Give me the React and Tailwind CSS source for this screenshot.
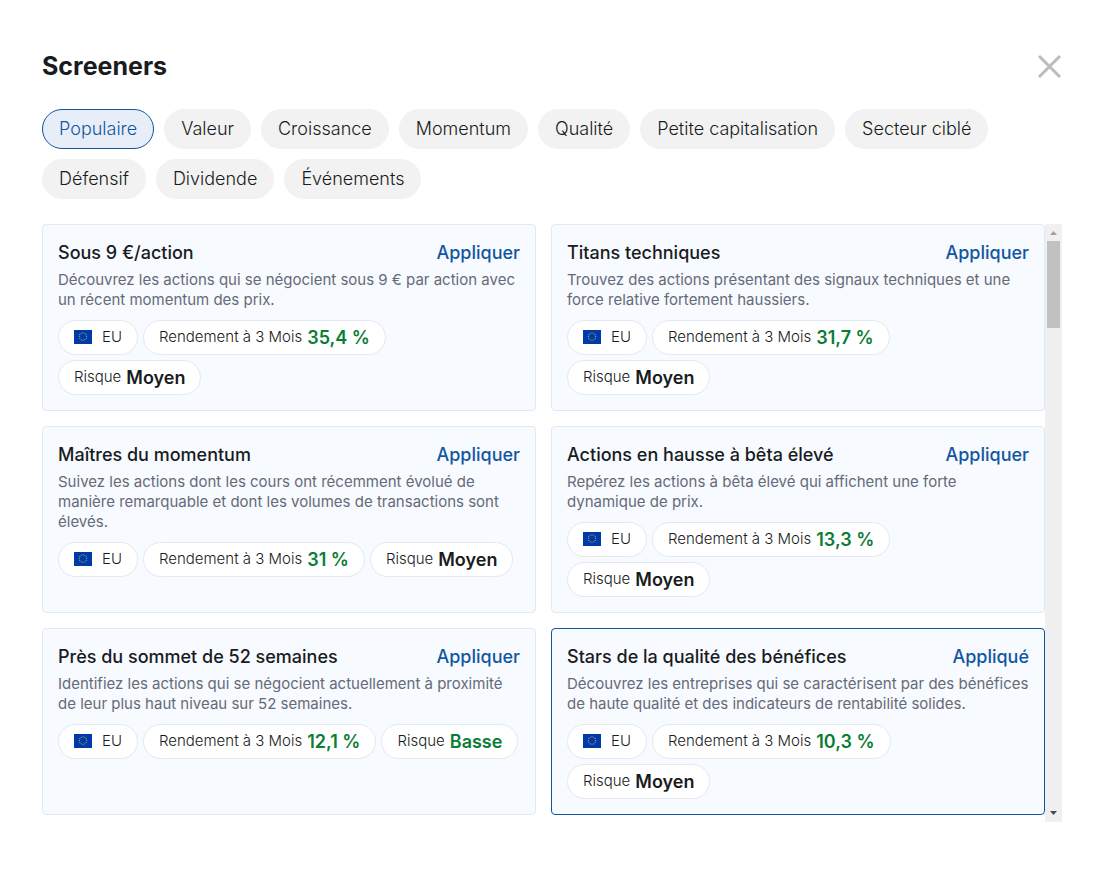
import React, { useState } from 'react';
import clsx from 'clsx';

const categories = [
    'Populaire',
    'Valeur',
    'Croissance',
    'Momentum',
    'Qualité',
    'Petite capitalisation',
    'Secteur ciblé',
    'Défensif',
    'Dividende',
    'Événements',
];

const screeners = [
    {
        id: 1,
        title: 'Sous 9 €/action',
        description: 'Découvrez les actions qui se négocient sous 9 € par action avec un récent momentum des prix.',
        performance: '35,4 %',
        risk: 'Moyen',
    },
    {
        id: 2,
        title: 'Titans techniques',
        description: 'Trouvez des actions présentant des signaux techniques et une force relative fortement haussiers.',
        performance: '31,7 %',
        risk: 'Moyen',
    },
    {
        id: 3,
        title: 'Maîtres du momentum',
        description:
            'Suivez les actions dont les cours ont récemment évolué de manière remarquable et dont les volumes de transactions sont élevés.',
        performance: '31 %',
        risk: 'Moyen',
    },
    {
        id: 4,
        title: 'Actions en hausse à bêta élevé',
        description: 'Repérez les actions à bêta élevé qui affichent une forte dynamique de prix.',
        performance: '13,3 %',
        risk: 'Moyen',
    },
    {
        id: 5,
        title: 'Près du sommet de 52 semaines',
        description:
            'Identifiez les actions qui se négocient actuellement à proximité de leur plus haut niveau sur 52 semaines.',
        performance: '12,1 %',
        risk: 'Basse',
    },
    {
        id: 6,
        title: 'Stars de la qualité des bénéfices',
        description:
            'Découvrez les entreprises qui se caractérisent par des bénéfices de haute qualité et des indicateurs de rentabilité solides.',
        performance: '10,3 %',
        risk: 'Moyen',
    },
];

const stars = Array.from({ length: 12 }, (_, i) => {
    const angle = (i * Math.PI) / 6;
    return { x: 9 + 3.7 * Math.sin(angle), y: 6.5 - 3.7 * Math.cos(angle) };
});

function EuFlag() {
    return (
        <svg viewBox="0 0 18 14" className="mb-px h-3.5 w-[18px] shrink-0" aria-hidden="true">
            <rect width="18" height="14" fill="#0039aa" />
            {stars.map((star, i) => (
                <circle key={i} cx={star.x} cy={star.y} r="0.55" fill="#c5b445" />
            ))}
        </svg>
    );
}

function Pill({ children, className }) {
    return (
        <li
            className={clsx(
                'flex h-[35px] items-center rounded-full border border-[#e3e9f2] bg-white px-[15px] text-[15px] font-light text-[#181c21]',
                className
            )}
        >
            {children}
        </li>
    );
}

function ScreenerCard({ screener, applied, onApply }) {
    return (
        <article
            className={clsx(
                'rounded border bg-[#f7faff] p-[15px]',
                applied ? 'border-[#1256a0]' : 'border-[#e3e9f2]'
            )}
        >
            <div className="mb-1 flex items-center justify-between text-lg leading-[26px]">
                <h2 className="font-medium text-[#181c21]">{screener.title}</h2>
                <button type="button" onClick={onApply} className="cursor-pointer font-medium text-[#1256a0]">
                    {applied ? 'Appliqué' : 'Appliquer'}
                </button>
            </div>
            <p className="text-[15px] leading-5 text-[#656a78]">{screener.description}</p>

            <ul className="mt-2.5 flex flex-wrap gap-[5px]">
                <Pill className="gap-2.5">
                    <EuFlag />
                    EU
                </Pill>
                <Pill className="gap-[5px]">
                    Rendement à 3 Mois
                    <span className="text-lg font-semibold text-[#0a7d35]">{screener.performance}</span>
                </Pill>
                <Pill className="gap-[5px]">
                    Risque
                    <span
                        className={clsx(
                            'text-lg font-semibold',
                            screener.risk === 'Basse' ? 'text-[#0a7d35]' : 'text-[#181c21]'
                        )}
                    >
                        {screener.risk}
                    </span>
                </Pill>
            </ul>
        </article>
    );
}

function ScrollTrack() {
    return (
        <div className="flex w-[17px] shrink-0 flex-col items-center bg-[#f0f0f0]" aria-hidden="true">
            <svg viewBox="0 0 17 17" className="size-[17px]">
                <path d="M5 11h7L8.500 7z" fill="#a0a0a0" />
            </svg>
            <div className="h-[87px] w-[13px] bg-[#c1c1c1]" />
            <svg viewBox="0 0 17 17" className="mt-auto size-[17px]">
                <path d="M5 6h7L8.500 10z" fill="#4a4a4a" />
            </svg>
        </div>
    );
}

export default function App() {
    const [category, setCategory] = useState('Populaire');
    const [appliedId, setAppliedId] = useState(6);

    return (
        <main className="bg-white px-[42px] py-12 font-['Inter',sans-serif] text-[#181c21]">
            <header className="flex items-center justify-between">
                <h1 className="text-[25px] leading-9 font-bold">Screeners</h1>
                <button type="button" aria-label="Fermer" className="cursor-pointer">
                    <svg viewBox="0 0 24 24" className="size-6" fill="none" stroke="#babcbf" strokeWidth="3">
                        <path d="M1 2l21 21M22 2l-21 21" />
                    </svg>
                </button>
            </header>

            {/* Categories */}
            <nav className="mt-[25px] flex flex-wrap gap-2.5">
                {categories.map((name) => (
                    <button
                        key={name}
                        type="button"
                        onClick={() => setCategory(name)}
                        className={clsx(
                            'h-10 cursor-pointer rounded-full border px-4 text-lg font-light',
                            name === category
                                ? 'border-[#1256a0] bg-[#e7eef7] text-[#1256a0]'
                                : 'border-[#f2f2f2] bg-[#f2f2f2]'
                        )}
                    >
                        {name}
                    </button>
                ))}
            </nav>

            {/* Screeners */}
            <section className="mt-[25px] flex">
                <div className="grid flex-1 grid-cols-2 gap-[15px] pb-[7px]">
                    {screeners.map((screener) => (
                        <ScreenerCard
                            key={screener.id}
                            screener={screener}
                            applied={screener.id === appliedId}
                            onApply={() => setAppliedId(screener.id)}
                        />
                    ))}
                </div>
                <ScrollTrack />
            </section>
        </main>
    );
}
